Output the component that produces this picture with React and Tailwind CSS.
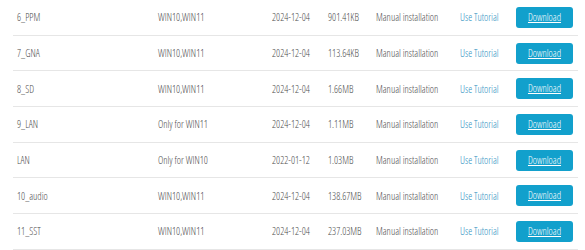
import React from "react";

const drivers = [
  { name: "6_PPM", os: "WIN10,WIN11", date: "2024-12-04", size: "901.41KB" },
  { name: "7_GNA", os: "WIN10,WIN11", date: "2024-12-04", size: "113.64KB" },
  { name: "8_SD", os: "WIN10,WIN11", date: "2024-12-04", size: "1.66MB" },
  { name: "9_LAN", os: "Only for WIN11", date: "2024-12-04", size: "1.11MB" },
  { name: "LAN", os: "Only for WIN10", date: "2022-01-12", size: "1.03MB" },
  { name: "10_audio", os: "WIN10,WIN11", date: "2024-12-04", size: "138.67MB" },
  { name: "11_SST", os: "WIN10,WIN11", date: "2024-12-04", size: "237.03MB" },
];

const DriverRow = ({ driver }) => (
  <div className="flex h-[35.7px] items-center whitespace-nowrap border-b border-[#e6e6e6] pt-px text-[10px] text-[#4d4d4d]">
    <div className="w-[145px] shrink-0 pl-1">{driver.name}</div>
    <div className="w-[114px] shrink-0">{driver.os}</div>
    <div className="w-[56px] shrink-0">{driver.date}</div>
    <div className="w-[48px] shrink-0">{driver.size}</div>
    <div className="w-[84px] shrink-0">Manual installation</div>
    <div className="w-[56px] shrink-0">
      <a href="#" className="text-[#2a8fc0]">Use Tutorial</a>
    </div>
    <a
      href="#"
      className="-mt-px flex h-[21px] w-[57px] shrink-0 items-center justify-center rounded-[3px] bg-[#12a0cc] text-white underline"
    >
      Download
    </a>
  </div>
);

export default function App() {
  return (
    <div className="h-[250px] w-[585px] overflow-hidden bg-white font-['Open_Sans',sans-serif] font-[350] font-stretch-[85%]">
      <div className="ml-[13px] w-[565px]">
        {drivers.map((d) => (
          <DriverRow key={d.name} driver={d} />
        ))}
      </div>
    </div>
  );
}
